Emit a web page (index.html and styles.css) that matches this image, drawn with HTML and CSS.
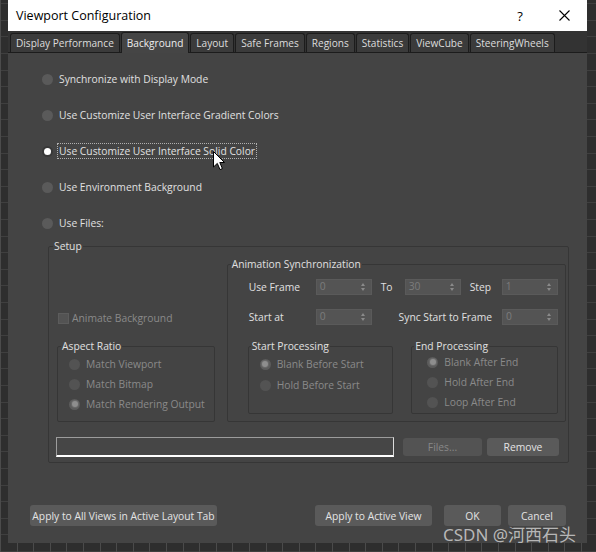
FILE: index.html
```html
<!DOCTYPE html>
<html lang="en">
<head>
    <meta charset="UTF-8">
    <meta name="viewport" content="width=device-width, initial-scale=1.0">
    <title>Viewport Configuration</title>
    <link rel="stylesheet" href="styles.css">
</head>
<body>

    <div class="dialog">
        <!-- Title bar -->
        <div class="title-bar">
            <span class="title">Viewport Configuration</span>
            <span class="title-help">?</span>
            <span class="title-close">
                <svg width="11" height="11" viewBox="0 0 11 11"><path d="M0.5 0.5 L10.5 10.5 M10.5 0.5 L0.5 10.5" stroke="#000" stroke-width="1.1" fill="none"/></svg>
            </span>
        </div>

        <!-- Tabs -->
        <div class="tab-strip">
            <div class="tab">Display Performance</div>
            <div class="tab active">Background</div>
            <div class="tab">Layout</div>
            <div class="tab">Safe Frames</div>
            <div class="tab">Regions</div>
            <div class="tab">Statistics</div>
            <div class="tab">ViewCube</div>
            <div class="tab">SteeringWheels</div>
        </div>

        <div class="tab-page">
            <div class="mode-list">
                <div class="radio-row"><span class="radio"></span>Synchronize with Display Mode</div>
                <div class="radio-row"><span class="radio"></span>Use Customize User Interface Gradient Colors</div>
                <div class="radio-row"><span class="radio checked"></span><span class="focus">Use Customize User Interface Solid Color</span></div>
                <div class="radio-row"><span class="radio"></span>Use Environment Background</div>
                <div class="radio-row"><span class="radio"></span>Use Files:</div>
            </div>

            <fieldset class="group setup">
                <legend>Setup</legend>
                <div class="setup-body">
                    <div class="setup-left">
                        <div class="check-row disabled"><span class="checkbox"></span>Animate Background</div>
                        <fieldset class="group aspect">
                            <legend>Aspect Ratio</legend>
                            <div class="radio-row small disabled"><span class="radio"></span>Match Viewport</div>
                            <div class="radio-row small disabled"><span class="radio"></span>Match Bitmap</div>
                            <div class="radio-row small disabled"><span class="radio checked"></span>Match Rendering Output</div>
                        </fieldset>
                    </div>

                    <fieldset class="group anim-sync">
                        <legend>Animation Synchronization</legend>
                        <div class="sync-row">
                            <span class="sync-label">Use Frame</span>
                            <span class="spinner">0</span>
                            <span class="sync-label to-label">To</span>
                            <span class="spinner">30</span>
                            <span class="sync-label step-label">Step</span>
                            <span class="spinner">1</span>
                        </div>
                        <div class="sync-row second">
                            <span class="sync-label">Start at</span>
                            <span class="spinner">0</span>
                            <span class="sync-label sync-start">Sync Start to Frame</span>
                            <span class="spinner">0</span>
                        </div>
                        <div class="process-row">
                            <fieldset class="group start-proc">
                                <legend>Start Processing</legend>
                                <div class="radio-row small disabled"><span class="radio checked"></span>Blank Before Start</div>
                                <div class="radio-row small disabled"><span class="radio"></span>Hold Before Start</div>
                            </fieldset>
                            <fieldset class="group end-proc">
                                <legend>End Processing</legend>
                                <div class="radio-row small disabled"><span class="radio checked"></span>Blank After End</div>
                                <div class="radio-row small disabled"><span class="radio"></span>Hold After End</div>
                                <div class="radio-row small disabled"><span class="radio"></span>Loop After End</div>
                            </fieldset>
                        </div>
                    </fieldset>
                </div>

                <div class="file-row">
                    <div class="path-field"></div>
                    <div class="button files-btn disabled">Files...</div>
                    <div class="button remove-btn">Remove</div>
                </div>
            </fieldset>

            <div class="footer">
                <div class="button apply-all">Apply to All Views in Active Layout Tab</div>
                <div class="footer-right">
                    <div class="button apply-active">Apply to Active View</div>
                    <div class="button ok-btn">OK</div>
                    <div class="button cancel-btn">Cancel</div>
                </div>
            </div>
        </div>
    </div>

    <!-- mouse pointer over the selected option -->
    <svg class="cursor" width="13" height="20" viewBox="0 0 13 20">
        <path d="M0.5 0.5 L0.5 16 L4.3 12.4 L7 18.6 L9.4 17.6 L6.8 11.5 L11.5 11.5 Z" fill="#fff" stroke="#000" stroke-width="1"/>
    </svg>

    <div class="watermark">CSDN @河西石头</div>

</body>
</html>
```

FILE: styles.css
```css
body {
    margin: 0;
    width: 596px;
    height: 552px;
    overflow: hidden;
    position: relative;
    font-family: 'Open Sans', 'Noto Sans', sans-serif;
    font-size: 10.3px;
    color: #e0e0e0;
    background-color: #2e2e2e;
    /* viewport grid behind the dialog */
    background-image:
        repeating-linear-gradient(90deg, #4b4b4b 0 1px, transparent 1px 16.6px),
        repeating-linear-gradient(0deg, #3f3f3f 0 1px, transparent 1px 16.6px);
}

.dialog {
    margin-left: 8px;
    width: 579px;
    height: 543px;
    background-color: #444444;
    display: flex;
    flex-direction: column;
}

/* ---------- title bar ---------- */
.title-bar {
    height: 31px;
    background-color: #ffffff;
    display: flex;
    align-items: center;
    color: #000;
}

.title {
    flex: 1;
    padding-left: 8px;
    font-size: 12.5px;
    padding-bottom: 1px;
}

.title-help {
    width: 42px;
    text-align: center;
    font-size: 13px;
}

.title-close {
    width: 46px;
    display: flex;
    justify-content: center;
    align-items: center;
}

/* ---------- tabs ---------- */
.tab-strip {
    height: 22px;
    box-sizing: border-box;
    background-color: #333333;
    border-bottom: 1px solid #1c1c1c;
    display: flex;
    align-items: flex-end;
    padding-left: 2px;
    gap: 1px;
}

.tab {
    height: 19px;
    line-height: 18px;
    box-sizing: border-box;
    padding: 0 5px;
    background-color: #3b3b3b;
    border: 1px solid #1c1c1c;
    border-bottom: none;
    border-radius: 3px 3px 0 0;
    color: #dddddd;
    font-size: 10.1px;
}

.tab.active {
    height: 21px;
    line-height: 20px;
    background-color: #454545;
    margin-bottom: -1px;
    color: #eeeeee;
}

/* ---------- page ---------- */
.tab-page {
    flex: 1;
    display: flex;
    flex-direction: column;
}

.mode-list {
    display: flex;
    flex-direction: column;
    gap: 20px;
    padding: 18px 0 0 34px;
}

.radio-row {
    display: flex;
    align-items: center;
    gap: 6px;
    height: 16px;
    white-space: nowrap;
}

.radio-row.small {
    height: 14px;
}

.radio {
    width: 11px;
    height: 11px;
    border-radius: 50%;
    background-color: #5a5a5a;
    flex-shrink: 0;
    display: flex;
    justify-content: center;
    align-items: center;
}

.radio.checked {
    background-color: #383838;
}

.radio.checked::after {
    content: "";
    width: 7px;
    height: 7px;
    border-radius: 50%;
    background-color: #ffffff;
}

.disabled {
    color: #8a8a8a;
}

.disabled .radio {
    background-color: #535353;
}

.disabled .radio.checked {
    background-color: #5c5c5c;
}

.disabled .radio.checked::after {
    width: 6px;
    height: 6px;
    background-color: #8e8e8e;
    box-shadow: 0 0 0 1px #6a6a6a;
}

.focus {
    margin-left: -2px;
    padding: 0 1px;
    line-height: 14px;
    border: 1px dotted #b0b0b0;
}

/* ---------- group boxes ---------- */
.group {
    margin: 0;
    min-width: 0;
    box-sizing: border-box;
    border: 1px solid #363636;
    border-radius: 2px;
}

.group legend {
    padding: 0 1px;
    line-height: 14px;
    color: #e0e0e0;
}

.setup {
    margin: 8px 0 0 40px;
    width: 521px;
    padding: 4px 2px 5px 8px;
}

.setup > legend {
    margin-left: -4px;
}

.setup-body {
    display: flex;
    gap: 12px;
}

.setup-left {
    width: 158px;
    display: flex;
    flex-direction: column;
}

.check-row {
    margin-top: 55px;
    height: 12px;
    display: flex;
    align-items: center;
    gap: 3px;
    padding-left: 1px;
}

.checkbox {
    width: 9px;
    height: 9px;
    background-color: #535353;
    border: 1px solid #5c5c5c;
}

.aspect {
    margin-top: auto;
    height: 83px;
    padding: 4px 0 0 11px;
    display: flex;
    flex-direction: column;
    gap: 6px;
}

.aspect > legend {
    margin-left: -8px;
}

.anim-sync {
    width: 340px;
    padding: 8px 7px 7px 21px;
}

.anim-sync > legend {
    margin-left: -18px;
}

.sync-row {
    display: flex;
    align-items: center;
    height: 16px;
}

.sync-row.second {
    margin-top: 14px;
}

.sync-label {
    width: 67px;
    color: #e0e0e0;
}

.to-label {
    width: 24px;
    margin-left: 9px;
}

.step-label {
    width: 32px;
    margin-left: 9px;
}

.sync-start {
    flex: 1;
    text-align: right;
    padding-right: 10px;
}

.spinner {
    width: 56px;
    height: 16px;
    box-sizing: border-box;
    background-color: #545454;
    border: 1px solid #5a5a5a;
    color: #7c7c7c;
    padding-left: 3px;
    line-height: 13px;
    position: relative;
}

/* up/down arrows of the spinner */
.spinner::before,
.spinner::after {
    content: "";
    position: absolute;
    right: 6px;
    border-left: 2.5px solid transparent;
    border-right: 2.5px solid transparent;
}

.spinner::before {
    top: 3px;
    border-bottom: 3px solid #8a8a8a;
}

.spinner::after {
    top: 8px;
    border-top: 3px solid #8a8a8a;
}

.process-row {
    display: flex;
    gap: 18px;
    margin: 14px 0 0 -1px;
}

.start-proc {
    width: 146px;
    height: 75px;
    padding: 4px 0 0 11px;
    display: flex;
    flex-direction: column;
    gap: 7px;
}

.start-proc > legend {
    margin-left: -9px;
}

.end-proc {
    width: 147px;
    height: 75px;
    padding: 2px 0 0 15px;
    display: flex;
    flex-direction: column;
    gap: 6px;
}

.end-proc > legend {
    margin-left: -13px;
}

/* ---------- files row ---------- */
.file-row {
    display: flex;
    align-items: center;
    margin: 15px 0 0 -1px;
    height: 20px;
}

.path-field {
    width: 338px;
    height: 20px;
    box-sizing: border-box;
    background-color: #464646;
    border: 1px solid #9c9c9c;
    border-right-color: #dcdcdc;
    border-bottom: 2px solid #ffffff;
}

.button {
    height: 21px;
    box-sizing: border-box;
    border-radius: 3px;
    background-color: #5a5a5a;
    color: #e4e4e4;
    display: flex;
    justify-content: center;
    align-items: center;
    white-space: nowrap;
}

.button.disabled {
    background-color: #535353;
    color: #888888;
}

.files-btn {
    width: 79px;
    height: 18px;
    margin-left: 9px;
}

.remove-btn {
    width: 72px;
    height: 18px;
    margin-left: 5px;
}

/* ---------- footer ---------- */
.footer {
    margin-top: 42px;
    padding: 0 21px 0 22px;
    display: flex;
    justify-content: space-between;
}

.apply-all {
    width: 187px;
}

.footer-right {
    display: flex;
}

.apply-active {
    width: 117px;
}

.ok-btn {
    width: 57px;
    margin-left: 12px;
}

.cancel-btn {
    width: 58px;
    margin-left: 7px;
}

/* ---------- overlays ---------- */
.cursor {
    position: absolute;
    left: 213px;
    top: 151px;
}

.watermark {
    position: absolute;
    left: 443px;
    top: 521px;
    font-family: 'Noto Sans', 'Noto Sans CJK SC', sans-serif;
    font-size: 17px;
    color: rgba(215, 215, 215, 0.8);
    white-space: nowrap;
}
```
